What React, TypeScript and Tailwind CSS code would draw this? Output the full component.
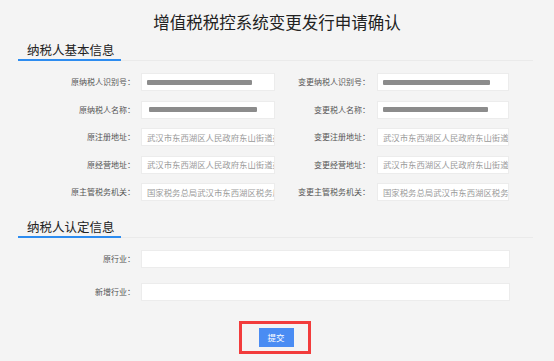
import React from "react";

const Label = ({ w, children }: { w: string; children: React.ReactNode }) => (
  <div className={`${w} shrink-0 text-right text-[8px] leading-[18px] text-[#555] whitespace-nowrap`}>{children}</div>
);

const Box = ({ w, children }: { w: string; children?: React.ReactNode }) => (
  <div className={`${w} shrink-0 h-[18px] bg-white border border-[#ececec] flex items-center pl-[5px] overflow-hidden whitespace-nowrap text-[8.4px] text-[#9a9a9a]`}>
    {children}
  </div>
);

const Redacted = ({ w }: { w: string }) => (
  <div className={`${w} h-[5px] bg-[#8c8c8c] rounded-[1px] blur-[0.4px]`} />
);

const SectionHeader = ({ title, cls }: { title: string; cls: string }) => (
  <div className={`${cls} ml-[18px] w-[515px] border-b border-[#eaeaea] flex`}>
    <div className="w-[103px] pl-[9px] border-b-2 border-[#2d8cf0] -mb-[1px] text-[12.5px] leading-[16px] text-[#222] pb-[1px]">
      {title}
    </div>
  </div>
);

export default function App() {
  const addr = "武汉市东西湖区人民政府东山街道办事处";
  const org = "国家税务总局武汉市东西湖区税务局";
  return (
    <div className="w-[554px] h-[361px] bg-[#f4f4f4] overflow-hidden font-['Noto_Sans_CJK_SC','Noto_Sans',sans-serif]">
      <h1 className="text-center text-[16.5px] leading-[20px] pt-[12px] text-[#222] font-normal">
        增值税税控系统变更发行申请确认
      </h1>
      <SectionHeader title="纳税人基本信息" cls="mt-[10px]" />
      <div className="mt-[12px] flex flex-col gap-[9.6px]">
        <div className="flex">
          <Label w="w-[135px]">原纳税人识别号：</Label>
          <div className="ml-[6px]"><Box w="w-[134px]"><Redacted w="w-[105px]" /></Box></div>
          <Label w="w-[95px]">变更纳税人识别号：</Label>
          <div className="ml-[7px]"><Box w="w-[132px]"><Redacted w="w-[107px]" /></Box></div>
        </div>
        <div className="flex">
          <Label w="w-[135px]">原纳税人名称：</Label>
          <div className="ml-[6px]"><Box w="w-[134px]"><div className="ml-[2px]"><Redacted w="w-[108px]" /></div></Box></div>
          <Label w="w-[95px]">变更税人名称：</Label>
          <div className="ml-[7px]"><Box w="w-[132px]"><Redacted w="w-[105px]" /></Box></div>
        </div>
        <div className="flex">
          <Label w="w-[135px]">原注册地址：</Label>
          <div className="ml-[6px]"><Box w="w-[134px]">{addr}</Box></div>
          <Label w="w-[95px]">变更注册地址：</Label>
          <div className="ml-[7px]"><Box w="w-[132px]">{addr}</Box></div>
        </div>
        <div className="flex">
          <Label w="w-[135px]">原经营地址：</Label>
          <div className="ml-[6px]"><Box w="w-[134px]">{addr}</Box></div>
          <Label w="w-[95px]">变更经营地址：</Label>
          <div className="ml-[7px]"><Box w="w-[132px]">{addr}</Box></div>
        </div>
        <div className="flex">
          <Label w="w-[135px]">原主管税务机关：</Label>
          <div className="ml-[6px]"><Box w="w-[134px]">{org}</Box></div>
          <Label w="w-[95px]">变更主管税务机关：</Label>
          <div className="ml-[7px]"><Box w="w-[132px]">{org}</Box></div>
        </div>
      </div>
      <SectionHeader title="纳税人认定信息" cls="mt-[18px]" />
      <div className="mt-[12px] flex flex-col gap-[14.5px]">
        <div className="flex">
          <Label w="w-[135px]">原行业：</Label>
          <div className="ml-[6px]"><Box w="w-[369px]" /></div>
        </div>
        <div className="flex">
          <Label w="w-[135px]">新增行业：</Label>
          <div className="ml-[6px]"><Box w="w-[369px]" /></div>
        </div>
      </div>
      <div className="mt-[20px] ml-[239px] w-[72px] h-[33px] border-[3px] border-[#f23c3c] flex items-center justify-center">
        <button className="w-[35px] h-[19px] bg-[#4a8cf3] text-white text-[8.5px] leading-[19px] -mr-[2px]">
          提交
        </button>
      </div>
    </div>
  );
}
